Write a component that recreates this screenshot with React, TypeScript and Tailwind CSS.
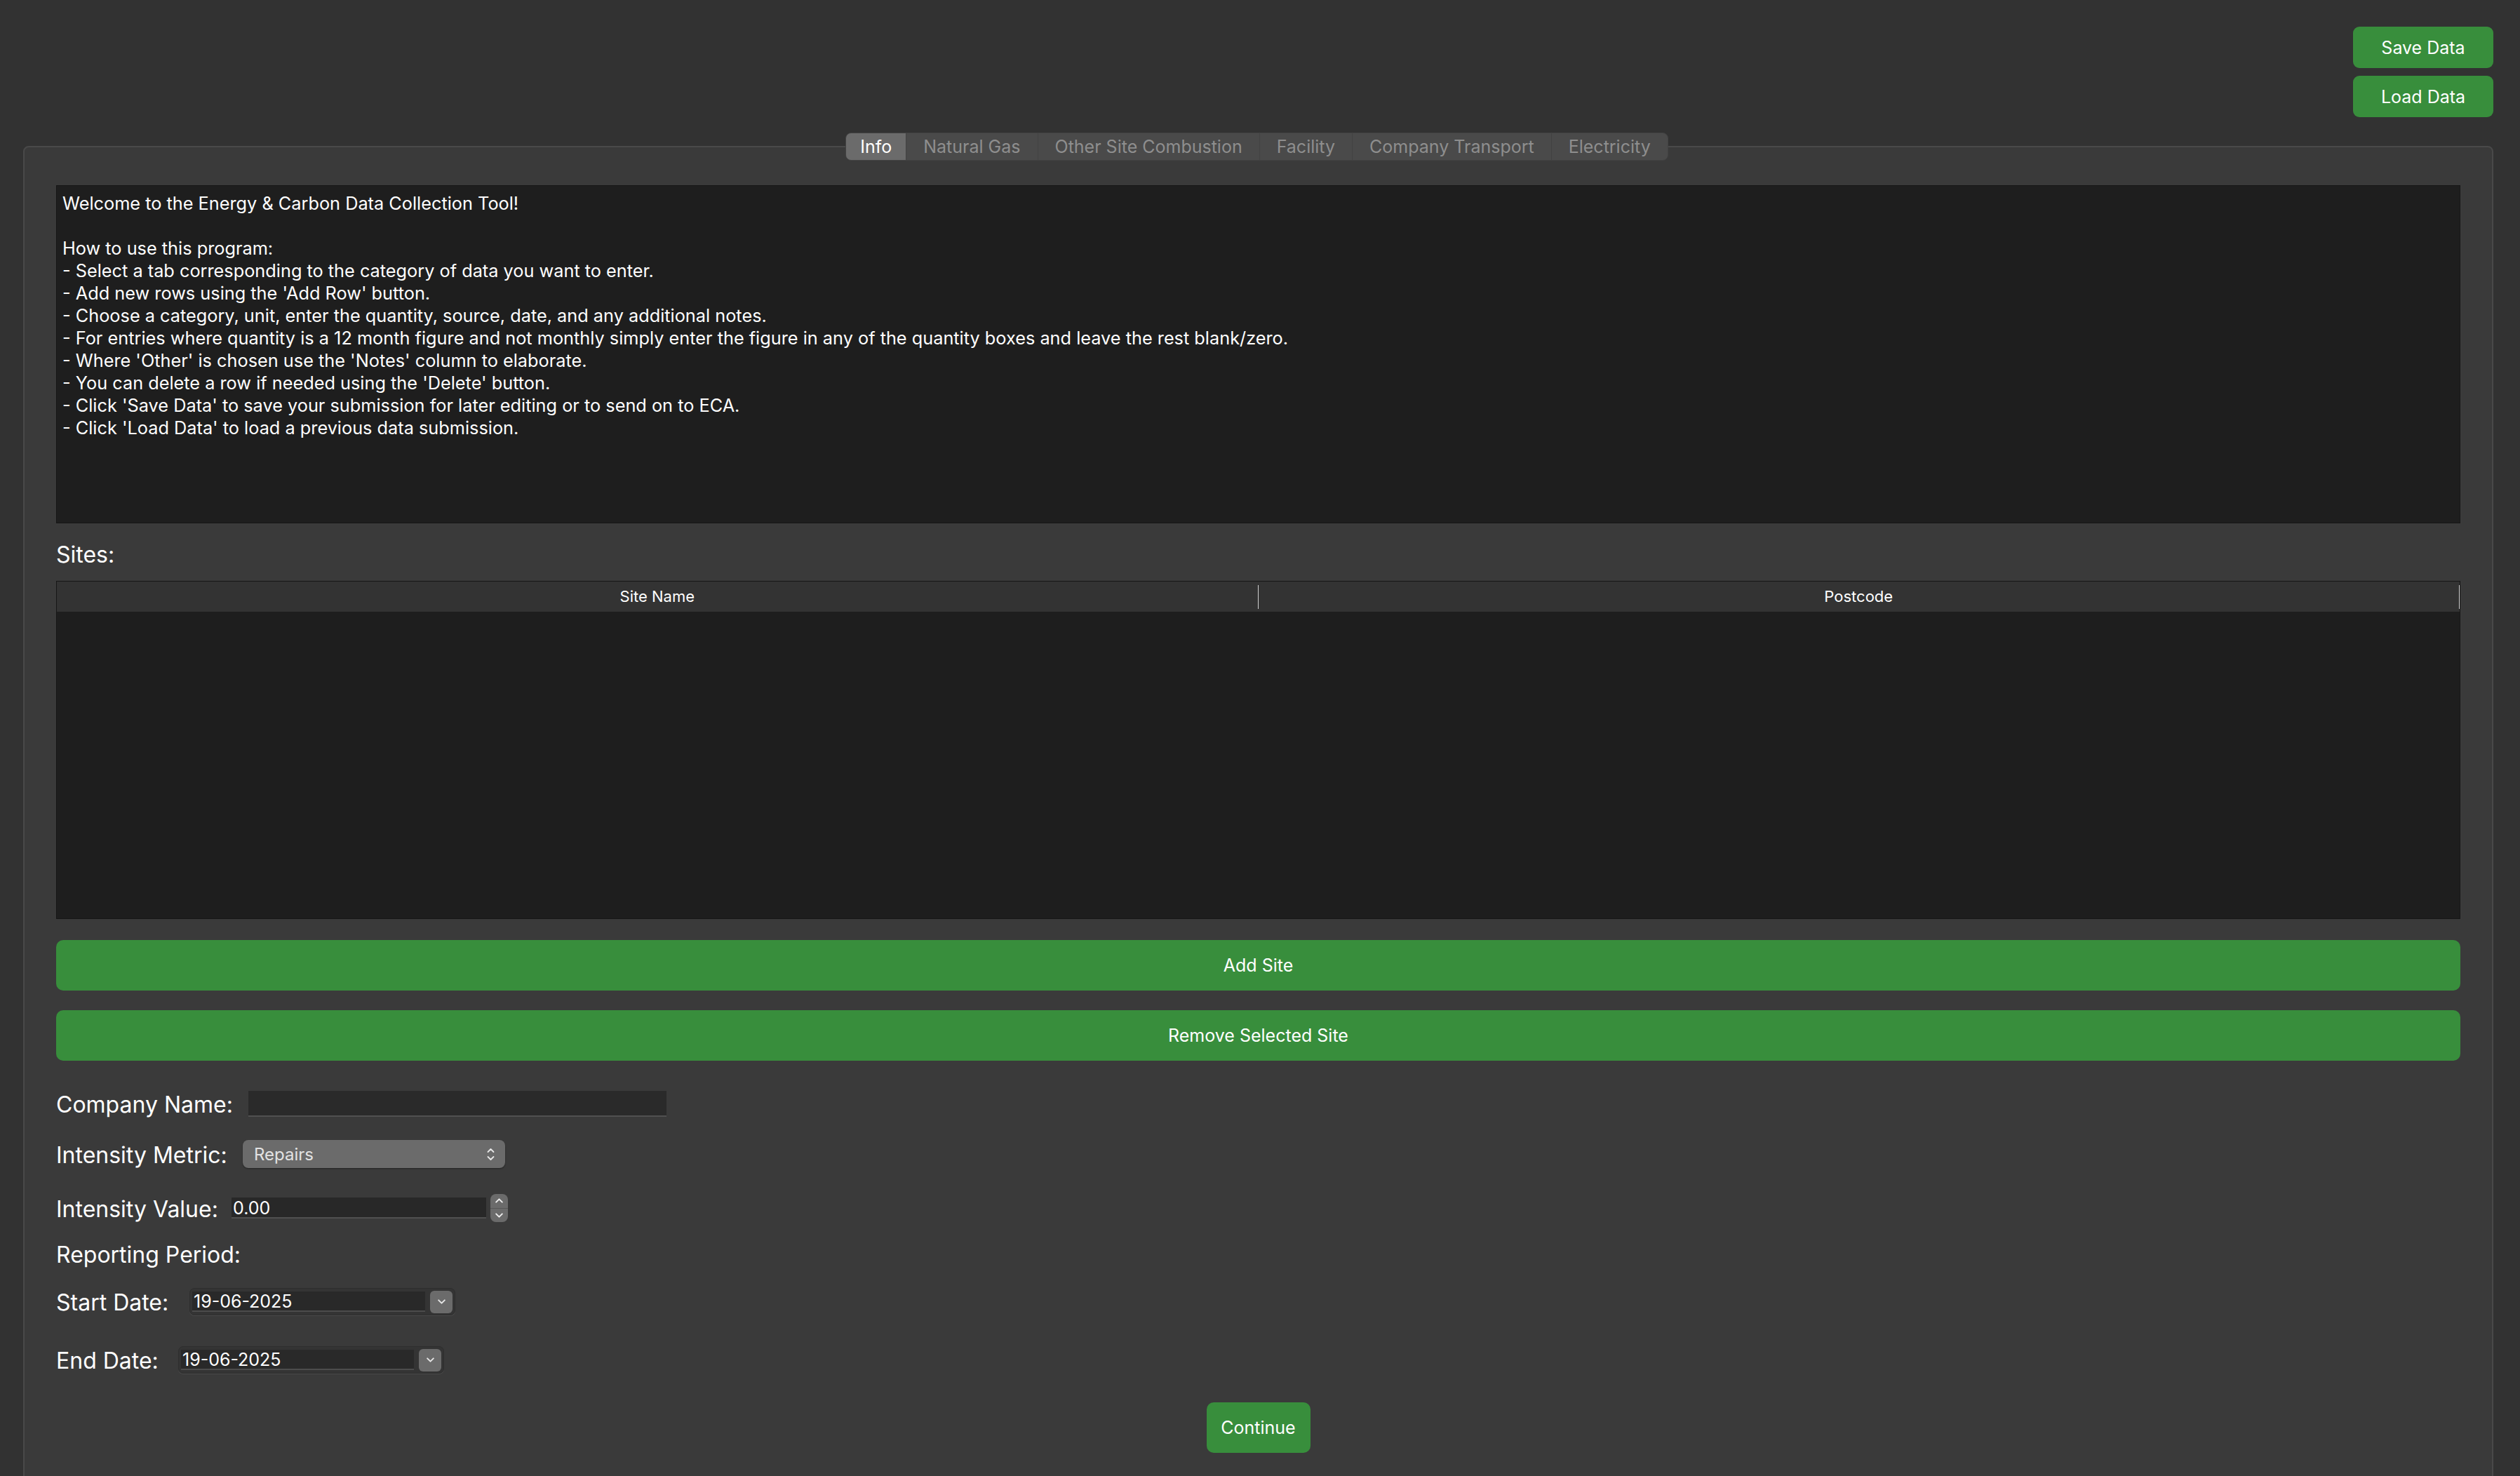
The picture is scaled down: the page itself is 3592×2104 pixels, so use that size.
import React from 'react';

const tabs = ['Info', 'Natural Gas', 'Other Site Combustion', 'Facility', 'Company Transport', 'Electricity'];

const infoText = `Welcome to the Energy & Carbon Data Collection Tool!

How to use this program:
- Select a tab corresponding to the category of data you want to enter.
- Add new rows using the 'Add Row' button.
- Choose a category, unit, enter the quantity, source, date, and any additional notes.
- For entries where quantity is a 12 month figure and not monthly simply enter the figure in any of the quantity boxes and leave the rest blank/zero.
- Where 'Other' is chosen use the 'Notes' column to elaborate.
- You can delete a row if needed using the 'Delete' button.
- Click 'Save Data' to save your submission for later editing or to send on to ECA.
- Click 'Load Data' to load a previous data submission.`;

function ChevronDown({ className }: { className?: string }) {
  return (
    <svg viewBox="0 0 12 8" className={className} fill="none" stroke="currentColor" strokeWidth="1.8" strokeLinecap="round" strokeLinejoin="round">
      <path d="M2 2 L6 6 L10 2" />
    </svg>
  );
}

function ChevronUp({ className }: { className?: string }) {
  return (
    <svg viewBox="0 0 12 8" className={className} fill="none" stroke="currentColor" strokeWidth="1.8" strokeLinecap="round" strokeLinejoin="round">
      <path d="M2 6 L6 2 L10 6" />
    </svg>
  );
}

function DateEdit({ value }: { value: string }) {
  return (
    <div className="flex items-center h-[39px] w-[379px] rounded-[7px] border border-[#2e2e2e] bg-[#343434] pl-[3px] pr-[3px] shadow-[0_1px_0_#4a4a4a]">
      <div className="h-[29px] w-[333px] bg-[#292929] border-b-2 border-[#4c4c4c] flex items-center pl-[2px] pt-[2px] text-[25px] text-white leading-none">
        {value}
      </div>
      <div className="ml-[7px] h-[32px] w-[32px] rounded-[6px] bg-[#6b6b6b] flex items-center justify-center text-[#e6e6e6]">
        <ChevronDown className="w-[13px] h-[9px]" />
      </div>
    </div>
  );
}

export default function App() {
  return (
    <div className="h-[2104px] overflow-hidden bg-[#323232] text-white font-['Inter',sans-serif]">
      {/* top-right actions */}
      <div className="flex flex-col items-end gap-[11px] pt-[38px] pr-[38px]">
        <button className="w-[200px] h-[59px] rounded-[9px] bg-[#388e3c] text-[25px] text-white pt-[2px]">Save Data</button>
        <button className="w-[200px] h-[59px] rounded-[9px] bg-[#388e3c] text-[25px] text-white pt-[2px]">Load Data</button>
      </div>

      <div className="ml-[33px] mr-[38px] mt-[22px]">
        {/* tab bar */}
        <div className="relative z-10 flex justify-center pr-[4px]">
          <div className="flex h-[40px] rounded-[8px] bg-[#4a4a4a] border border-[#424242] overflow-hidden text-[25px]">
            {tabs.map((t, i) => (
              <div
                key={t}
                className={
                  i === 0
                    ? 'px-[20px] pt-[2px] flex items-center bg-[#6b6b6b] text-white'
                    : 'px-[24px] pt-[2px] flex items-center text-[#8e8e8e] border-l border-[#424242]'
                }
              >
                {t}
              </div>
            ))}
          </div>
        </div>

        {/* group panel */}
        <div className="-mt-[21px] h-[2000px] rounded-t-[8px] border-2 border-[#494949] bg-[#3a3a3a] px-[45px] pt-[54px]">
          <div className="h-[482px] border border-[#161616] bg-[#1e1e1e] px-[8px] pt-[9px] text-[25.3px] leading-[32px] whitespace-pre-line">
            {infoText}
          </div>

          <div className="mt-[25px] mb-[17px] h-[40px] flex items-center text-[32px]">Sites:</div>

          <div className="h-[482px] border border-[#161616] bg-[#1e1e1e] flex flex-col">
            <div className="h-[43px] bg-[#333333] flex items-center text-[22px]">
              <div className="flex-1 h-[34px] flex items-center justify-center border-r border-[#d0d0d0]">Site Name</div>
              <div className="flex-1 h-[34px] flex items-center justify-center border-r border-[#d0d0d0]">Postcode</div>
            </div>
          </div>

          <button className="mt-[30px] w-full h-[72px] rounded-[10px] bg-[#388e3c] text-[25px] text-white pt-[2px]">Add Site</button>
          <button className="mt-[28px] w-full h-[72px] rounded-[10px] bg-[#388e3c] text-[25px] text-white pt-[2px]">Remove Selected Site</button>

          <div className="mt-[43px] flex items-center h-[37px]">
            <div className="w-[274px] text-[32px] pt-[3px]">Company Name:</div>
            <div className="h-[37px] w-[596px] bg-[#2a2a2a] border-b-2 border-[#505050]" />
          </div>

          <div className="mt-[33px] flex items-center h-[40px]">
            <div className="w-[266px] text-[32px] pt-[3px]">Intensity Metric:</div>
            <div className="h-[40px] w-[374px] rounded-[8px] bg-[#6b6b6b] shadow-[0_1px_2px_rgba(0,0,0,0.4)] flex items-center justify-between pl-[16px] pr-[14px] text-[24px] text-[#e2e2e2]">
              <span className="pt-[2px]">Repairs</span>
              <span className="flex flex-col items-center gap-[3px] text-[#e8e8e8]">
                <ChevronUp className="w-[13px] h-[8px]" />
                <ChevronDown className="w-[13px] h-[8px]" />
              </span>
            </div>
          </div>

          <div className="mt-[37px] flex items-center h-[40px]">
            <div className="w-[250px] text-[32px] pt-[3px]">Intensity Value:</div>
            <div className="h-[30px] w-[363px] bg-[#282828] border-b-2 border-[#505050] flex items-center pl-[2px] pt-[2px] text-[25px] leading-none">0.00</div>
            <div className="ml-[6px] h-[40px] w-[25px] rounded-[8px] bg-[#6b6b6b] flex flex-col text-[#eeeeee]">
              <div className="flex-1 flex items-center justify-center border-b border-[#565656]">
                <ChevronUp className="w-[13px] h-[9px]" />
              </div>
              <div className="flex-1 flex items-center justify-center">
                <ChevronDown className="w-[13px] h-[9px]" />
              </div>
            </div>
          </div>

          <div className="mt-[25px] h-[40px] flex items-center text-[32px] pt-[3px]">Reporting Period:</div>

          <div className="mt-[29px] flex items-center h-[39px]">
            <div className="w-[190px] text-[32px] pt-[3px]">Start Date:</div>
            <DateEdit value="19-06-2025" />
          </div>

          <div className="mt-[44px] flex items-center h-[39px]">
            <div className="w-[174px] text-[32px] pt-[3px]">End Date:</div>
            <DateEdit value="19-06-2025" />
          </div>

          <div className="mt-[41px] flex justify-center">
            <button className="w-[148px] h-[72px] rounded-[10px] bg-[#388e3c] text-[25px] text-white pt-[2px]">Continue</button>
          </div>
        </div>
      </div>
    </div>
  );
}
